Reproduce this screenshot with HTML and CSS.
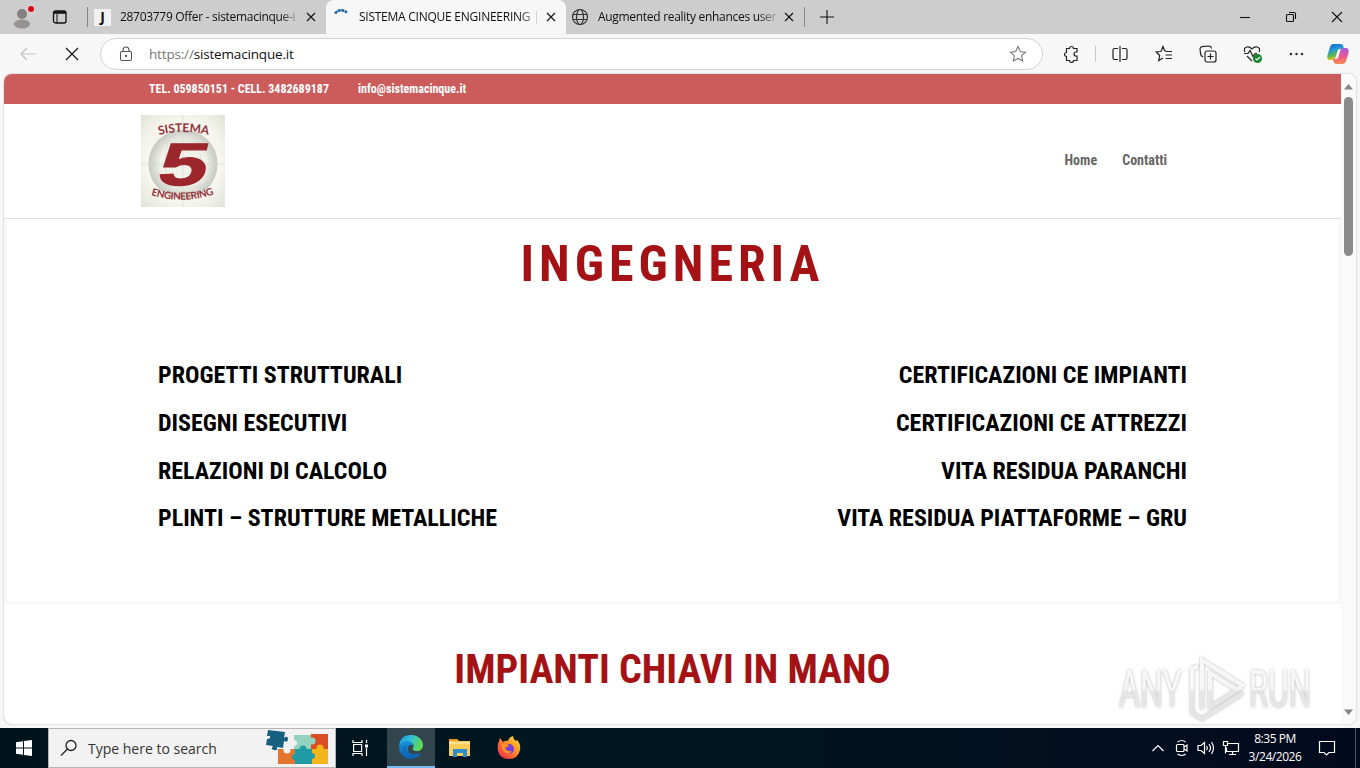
FILE: index.html
```
<!DOCTYPE html>
<html lang="it">
<head>
    <meta charset="UTF-8">
    <title>SISTEMA CINQUE ENGINEERING</title>
    <link rel="stylesheet" href="styles.css">
</head>
<body>
    <div class="tabs">
        <div class="profile">
            <svg width="34" height="34" viewBox="0 0 34 34"><circle cx="22" cy="14" r="5" fill="#858080"/><ellipse cx="22" cy="24" rx="8" ry="4.5" fill="#979391"/><circle cx="31" cy="9" r="4" fill="#e8d4d4"/><circle cx="31" cy="9" r="3" fill="#d9001b"/></svg>
        </div>
        <svg class="workspace" width="16" height="16" viewBox="0 0 16 16" fill="none" stroke="#111" stroke-width="1.3"><rect x="1.5" y="2" width="12.5" height="12" rx="2"/><path d="M1.500 3.500h12.500" stroke-width="2.500"/><path d="M5 5v9" stroke-width="1"/></svg>
        <div class="divider"></div>
        <div class="tab tab-offer">
            <span class="favicon">J</span>
            <span class="tab-title">28703779 Offer - sistemacinque-i</span>
            <svg class="x" width="10" height="10" viewBox="0 0 10 10"><path d="M1 1l8 8M9 1l-8 8"/></svg>
        </div>
        <div class="tab tab-active">
            <svg class="spinner" width="16" height="16" viewBox="0 0 16 16"><path d="M1 4.500Q6.500-1.500 13 3.500" fill="none" stroke="#1763a0" stroke-width="2.500" stroke-dasharray="3 .6"/></svg>
            <span class="tab-title">SISTEMA CINQUE ENGINEERING |</span>
            <svg class="x" width="10" height="10" viewBox="0 0 10 10"><path d="M1 1l8 8M9 1l-8 8"/></svg>
        </div>
        <div class="tab tab-ar">
            <svg width="18" height="18" viewBox="0 0 18 18" fill="none" stroke="#333" stroke-width="1.200"><circle cx="9" cy="9" r="7.500"/><ellipse cx="9" cy="9" rx="3.500" ry="7.500"/><path d="M2 6.500h14M2 11.500h14"/></svg>
            <span class="tab-title">Augmented reality enhances user</span>
            <svg class="x" width="10" height="10" viewBox="0 0 10 10"><path d="M1 1l8 8M9 1l-8 8"/></svg>
        </div>
        <div class="divider last"></div>
        <svg class="plus" width="14" height="14" viewBox="0 0 14 14"><path d="M7 0v14M0 7h14"/></svg>
        <div class="window-buttons">
            <svg width="12" height="12" viewBox="0 0 12 12"><path d="M1 6.500h10"/></svg>
            <svg width="12" height="12" viewBox="0 0 12 12"><rect x="1.500" y="3.500" width="7" height="7" rx="1"/><path d="M4 1.500h5q1.500 0 1.500 1.500v5"/></svg>
            <svg width="12" height="12" viewBox="0 0 12 12"><path d="M1 1l10 10M11 1L1 11"/></svg>
        </div>
    </div>

    <div class="toolbar">
        <svg class="back" width="16" height="14" viewBox="0 0 16 14"><path d="M15.500 7H1M7 1L1 7l6 6"/></svg>
        <svg class="stop" width="14" height="14" viewBox="0 0 14 14"><path d="M1 1l12 12M13 1L1 13"/></svg>
        <div class="address">
            <svg width="14" height="16" viewBox="0 0 14 16" fill="none" stroke="#555" stroke-width="1.100"><rect x="1.500" y="5.500" width="11" height="9" rx="1.500"/><path d="M4 5.500V4a3 3 0 0 1 6 0v1.500"/><circle cx="7" cy="10" r=".6" fill="#555"/></svg>
            <span class="url"><span>https://</span>sistemacinque.it</span>
            <svg class="star" width="18" height="18" viewBox="0 0 18 18" fill="none" stroke="#777" stroke-width="1.100"><path d="M9 1.500l2.300 5 5.200.6-3.900 3.600 1.100 5.300L9 13.400 4.300 16l1.100-5.300L1.500 7.100l5.200-.6z"/></svg>
        </div>
        <div class="tools">
            <svg width="18" height="18" viewBox="0 0 18 18"><path d="M4.500 3.500h3a2 2 0 0 1 4 0H15v3.500h-1a2 2 0 0 0 0 4h1v4.500h-3.500a2 2 0 0 1-4 0h-3V11.500a2 2 0 0 1 0-4z"/></svg>
            <div class="tool-divider"></div>
            <svg width="18" height="18" viewBox="0 0 18 18"><path d="M7 3.500H3.500q-1.500 0-1.500 1.500v8q0 1.500 1.500 1.500H7M11 3.500h3.500q1.500 0 1.500 1.500v8q0 1.500-1.500 1.500H11M9 1v16"/></svg>
            <svg width="18" height="18" viewBox="0 0 18 18"><path d="M11 6L9.500 5.500 8 1.500 6 6.500l-4.800.5 3.500 3.500-1 5L8 13M10.500 6.500H17M10.500 10H17M10.500 13.500H17"/></svg>
            <svg width="18" height="18" viewBox="0 0 18 18"><rect x="6" y="6" width="11" height="11" rx="2"/><path d="M11.500 8.500v6M8.500 11.500h6M4 12Q1.500 11 1.500 8L1 4Q1 2 3 1.700l7-.7q2 0 2.500 2.500"/></svg>
            <svg width="20" height="18" viewBox="0 0 20 18"><path d="M2 7Q0 3 4 2q3-.5 5 2 2-2.500 5-2 4 1 2 5M1 8.500h4l2-3 3 6 2-3h2M4 11l5 5"/><circle cx="14.500" cy="13.500" r="4.500" fill="#16842b" stroke="none"/><path d="M12.500 13.500l1.500 1.500 3-3" stroke="#fff"/></svg>
            <svg class="more" width="18" height="18" viewBox="0 0 18 18"><g fill="#222" stroke="none"><circle cx="4" cy="9" r="1.200"/><circle cx="9.500" cy="9" r="1.200"/><circle cx="15" cy="9" r="1.200"/></g></svg>
            <svg class="copilot" width="22" height="20" viewBox="0 0 22 20">
                <defs>
                    <linearGradient id="cop1" x2="0.300" y2="1"><stop stop-color="#165ac4"/><stop offset=".4" stop-color="#1f97dd"/><stop offset=".75" stop-color="#62b84c"/><stop offset="1" stop-color="#f0c518"/></linearGradient>
                    <linearGradient id="cop2" x2="0" y2="1"><stop stop-color="#a45be0"/><stop offset=".5" stop-color="#ec5595"/><stop offset="1" stop-color="#f98a4c"/></linearGradient>
                </defs>
                <g stroke="none"><path d="M6 0h8q2 0 2.500 3l.5 2h-4q-2 0-2.500 2L8.700 13q-.7 3-3 3H3q-3.500 0-2.500-5L3 3q1-3 3-3z" fill="url(#cop1)"/><path d="M16 20H9q-2 0-2.700-3L6 15h3q2 0 2.500-2L13 7q.8-3 3-3h3q3.500 0 2.500 5L19 17q-1 3-3 3z" fill="url(#cop2)"/></g>
            </svg>
        </div>
    </div>

    <div class="viewport">
        <div class="site">
            <div class="top-header">
                <span class="condensed">TEL. 059850151 - CELL. 3482689187</span>
                <span class="condensed mail">info@sistemacinque.it</span>
            </div>
            <header>
                <svg class="logo" width="84" height="92" viewBox="0 0 84 92">
                    <defs>
                        <radialGradient id="paper" r=".75"><stop offset=".6" stop-color="#f6f6ee"/><stop offset="1" stop-color="#dde0d4"/></radialGradient>
                        <radialGradient id="globe"><stop offset=".65" stop-color="#f1f2ea"/><stop offset="1" stop-color="#c5c9c1"/></radialGradient>
                        <path id="arc-top" d="M18 20Q42 14 68 20"/>
                        <path id="arc-bottom" d="M10 80Q42 90 74 79"/>
                    </defs>
                    <rect width="84" height="92" fill="url(#paper)"/>
                    <circle cx="42" cy="49" r="34.500" fill="url(#globe)"/>
                    <path d="M42 0v92M0 49h84M12 32Q42 20 72 32M12 67Q42 78 72 67M30 17Q18 49 30 81M54 17Q66 49 54 81" fill="none" stroke="#d3d7cf" stroke-width=".6"/>
                    <text class="logo-text"><textPath href="#arc-top" textLength="50">SISTEMA</textPath></text>
                    <text class="logo-five" transform="translate(14.500 69.500) scale(1.450 1) skewX(-9)">5</text>
                    <text class="logo-text small"><textPath href="#arc-bottom" textLength="64">ENGINEERING</textPath></text>
                </svg>
                <nav>
                    <a class="condensed">Home</a>
                    <a class="condensed">Contatti</a>
                </nav>
            </header>
            <section class="ingegneria">
                <h1><span class="condensed">INGEGNERIA</span></h1>
                <div class="columns">
                    <ul>
                        <li class="condensed">PROGETTI STRUTTURALI</li>
                        <li class="condensed">DISEGNI ESECUTIVI</li>
                        <li class="condensed">RELAZIONI DI CALCOLO</li>
                        <li class="condensed">PLINTI – STRUTTURE METALLICHE</li>
                    </ul>
                    <ul class="right">
                        <li class="condensed">CERTIFICAZIONI CE IMPIANTI</li>
                        <li class="condensed">CERTIFICAZIONI CE ATTREZZI</li>
                        <li class="condensed">VITA RESIDUA PARANCHI</li>
                        <li class="condensed">VITA RESIDUA PIATTAFORME – GRU</li>
                    </ul>
                </div>
            </section>
            <section class="impianti">
                <h2><span class="condensed">IMPIANTI CHIAVI IN MANO</span></h2>
            </section>
        </div>
        <div class="scrollbar">
            <svg width="9" height="6" viewBox="0 0 9 6"><path d="M0 5.500L4.500 0 9 5.500z"/></svg>
            <div class="thumb"></div>
            <svg class="down" width="9" height="6" viewBox="0 0 9 6"><path d="M0 .5L4.500 6 9 .5z"/></svg>
        </div>
    </div>

    <!-- watermark -->
    <svg class="watermark" width="212" height="72" viewBox="0 0 212 72">
        <defs><linearGradient id="fade" gradientUnits="userSpaceOnUse" x1="0" y1="10" x2="0" y2="62"><stop offset=".5" stop-color="#fff"/><stop offset=".55" stop-color="#ececec"/></linearGradient></defs>
        <g class="mark">
            <text x="5" y="54" textLength="63" lengthAdjust="spacingAndGlyphs">ANY</text>
            <path d="M84 13l-6 3v44l10 6 41-26M88 56V7l40 25-5 5-27-17v34l32-20"/>
            <text x="135" y="54" textLength="62" lengthAdjust="spacingAndGlyphs">RUN</text>
        </g>
    </svg>

    <div class="taskbar">
        <div class="start">
            <svg width="16" height="16" viewBox="0 0 16 16" fill="#fff"><path d="M0 2.300L7 1.300v6.200H0zM8 1.100L16 0v7.500H8zM0 8.500h7v6.200l-7-1zM8 8.500h8V16l-8-1.100z"/></svg>
        </div>
        <div class="search">
            <svg width="18" height="18" viewBox="0 0 18 18" fill="none" stroke="#222" stroke-width="1.300"><circle cx="11" cy="6.500" r="5"/><path d="M7.500 10L1 16.500"/></svg>
            <span>Type here to search</span>
            <svg class="puzzle" width="64" height="36" viewBox="0 0 64 36">
                <path d="M13 20h17v15H13z" fill="#e3752d"/>
                <path d="M29 6h17v14H29z" fill="#93d3c0"/>
                <path d="M46 5h17v15H46z" fill="#d94e24"/>
                <path d="M30 20h17v15H30z" fill="#1f9ba5"/>
                <path d="M47 20h16v15H47z" fill="#f3b51b"/>
                <circle cx="47" cy="12" r="3.500" fill="#93d3c0"/><circle cx="38" cy="20" r="3.500" fill="#1f9ba5"/><circle cx="55" cy="19" r="3.500" fill="#f3b51b"/><circle cx="47" cy="27" r="3" fill="#1f9ba5"/><circle cx="29" cy="14" r="3" fill="#f2f2f2"/><circle cx="22" cy="21" r="3.500" fill="#f2f2f2"/><circle cx="30" cy="28" r="3" fill="#1f9ba5"/>
                <path d="M3 1l17 2-1 6q4-3 4 1t-4 2l-1 7-6-1q1 4-3 3t-1-4l-7-1 1-6q4 0 3-3H2z" fill="#17607f"/>
            </svg>
        </div>
        <div class="task task-view">
            <svg width="18" height="18" viewBox="0 0 18 18" fill="none" stroke="#fff" stroke-width="1.200"><path d="M2 1v2.500h9V1M2 17v-2.500h9V17M2.600 5.500h8v7h-8zM15.500 1v3M15.500 9v8"/><path d="M14 5.500h3v3h-3z" fill="#fff" stroke="none"/></svg>
        </div>
        <div class="task current">
            <svg width="24" height="24" viewBox="0 0 24 24">
                <defs>
                    <linearGradient id="edge1" x2="1" y2=".3"><stop stop-color="#1b93d8"/><stop offset=".5" stop-color="#2fc1dc"/><stop offset="1" stop-color="#61d955"/></linearGradient>
                    <linearGradient id="edge2" x2="0" y2="1"><stop stop-color="#1795dc"/><stop offset="1" stop-color="#0c59a6"/></linearGradient>
                </defs>
                <path d="M0 11Q1 0 12 0c7 0 12 5 12 10 0 4-3 6-6 6-4 0-5-2-4-3 2-3-1-6-5-6Q3 7 0 11z" fill="url(#edge1)"/>
                <path d="M0 12q2-6 8-6 5 0 6 4-4-1-5 3c-1 5 5 8 13 5q-3 6-10 6Q1 24 0 12z" fill="url(#edge2)"/>
                <path d="M8 10q-5 8 4 14Q3 23 4 15q1-4 4-5z" fill="#1668bd"/>
            </svg>
        </div>
        <div class="task">
            <svg width="22" height="20" viewBox="0 0 22 20"><path d="M0 1h8l2 2h11v15H0z" fill="#f9cd57"/><path d="M0 1h8l1.500 2H0z" fill="#e99c1f"/><path d="M4 11h14v8h-4v-4H8v4H4z" fill="#2d8ecb"/><path d="M0 4h21v2H0z" fill="#ffe090"/></svg>
        </div>
        <div class="task">
            <svg width="24" height="24" viewBox="0 0 24 24">
                <defs><linearGradient id="fox" x1="1" x2=".1" y2="1"><stop stop-color="#ffe84a"/><stop offset=".4" stop-color="#ff9a24"/><stop offset="1" stop-color="#f5234c"/></linearGradient></defs>
                <path d="M2 5l1-3 3 4q3-2 5-1 1-4 5-5 0 3 3 5l1-1q4 4 3 10-2 9-11 9Q3 23 1 15q-1-6 1-10z" fill="url(#fox)"/>
                <circle cx="12" cy="13" r="5" fill="#7a3ee0"/>
                <path d="M5 8q6-1 7 2l-4 2q2 4 7 3-3 5-8 1-3-4-2-8z" fill="#ff9226"/>
            </svg>
        </div>
        <div class="tray">
            <svg width="14" height="8" viewBox="0 0 14 8"><path d="M1.500 7L7 1.500 12.500 7"/></svg>
            <svg width="14" height="18" viewBox="0 0 14 18"><rect x="1.500" y="5.500" width="7.500" height="7" rx="1"/><path d="M9 8l3-2v6l-3-2M2.500 3Q7 0 10.500 3M2.500 15q4.500 3 8 0"/></svg>
            <svg width="18" height="16" viewBox="0 0 18 16"><path d="M1 5.500h3l3.500-3v11L4 10.500H1zM9.500 6q1.500 2 0 4M12 4q3 4 0 8M14.500 2q4 6 0 12"/></svg>
            <svg width="18" height="16" viewBox="0 0 18 16"><path d="M6 3.500h10.500v8H4.500v-4M1.500 1.500h4v4h-4zM3.500 5.500v8M10.500 11.500v3M7 14.500h7"/></svg>
            <div class="clock"><span>8:35 PM</span><span>3/24/2026</span></div>
            <svg class="notify" width="18" height="18" viewBox="0 0 18 18"><path d="M1.500 2.500h15v11H11l-2.500 2.500L6 13.500H1.500z"/></svg>
            <div class="desktop"></div>
        </div>
    </div>
</body>
</html>
```
FILE: styles.css
```
* {
    box-sizing: border-box;
}

body {
    margin: 0;
    width: 1360px;
    height: 768px;
    display: flex;
    flex-direction: column;
    overflow: hidden;
    background: #f7f7f7;
    font-family: "Open Sans", "Noto Sans", sans-serif;
    color: #111;
}

svg {
    display: block;
    flex: none;
}

/* Tab strip */
.tabs {
    display: flex;
    align-items: center;
    height: 34px;
    background: #cdcdcd;
}

.profile {
    width: 52px;
}

.profile svg {
    overflow: visible;
}

.divider {
    width: 1px;
    height: 20px;
    margin-left: 19px;
    background: #8a8a8a;
}

.divider.last {
    margin-left: 0;
}

.tab {
    display: flex;
    align-items: center;
    height: 34px;
    padding-right: 10px;
}

.tab-offer {
    width: 238px;
    padding-left: 6px;
}

.tab-active {
    width: 240px;
    padding-left: 8px;
    background: #f7f7f7;
    border-radius: 8px 8px 0 0;
}

.tab-ar {
    width: 238px;
    padding-left: 5px;
}

.favicon {
    width: 17px;
    height: 17px;
    background: #f1f1f3;
    font: bold 14px/16px "Noto Sans", sans-serif;
    text-align: center;
}

.tab-title {
    flex: 1;
    margin: 0 3px 0 9px;
    white-space: nowrap;
    font-size: 12px;
    line-height: 20px;
    letter-spacing: -0.3px;
    -webkit-mask-image: linear-gradient(to right, #000 160px, transparent 182px);
    mask-image: linear-gradient(to right, #000 160px, transparent 182px);
}

.tab-active .tab-title {
    letter-spacing: -0.25px;
}

.x, .plus, .stop, .window-buttons svg {
    fill: none;
    stroke: #111;
    stroke-width: 1.1;
}

.plus {
    margin-left: 15px;
}

.window-buttons {
    display: flex;
    gap: 34px;
    margin-left: auto;
    margin-right: 17px;
}

/* Toolbar */
.toolbar {
    display: flex;
    align-items: center;
    height: 40px;
    padding-left: 20px;
}

.back {
    fill: none;
    stroke: #c4c4c4;
    stroke-width: 1.2;
}

.stop {
    margin-left: 29px;
}

.address {
    display: flex;
    align-items: center;
    width: 943px;
    height: 32px;
    margin-left: 21px;
    padding: 0 15px 0 18px;
    background: #fff;
    border: 1px solid #d3d3d3;
    border-radius: 16px;
}

.url {
    flex: 1;
    margin-left: 16px;
    font-size: 13.5px;
    letter-spacing: -0.17px;
}

.url span {
    color: #777;
}

.tools {
    display: flex;
    align-items: center;
    gap: 26px;
    margin-left: 19px;
    fill: none;
    stroke: #222;
    stroke-width: 1.2;
}

.tool-divider {
    width: 1px;
    height: 16px;
    margin: 0 -11px;
    background: #c8c8c8;
}

.more {
    margin: 0 -4px 0 -2px;
}

/* Page area */
.viewport {
    display: flex;
    width: 1352px;
    height: 650px;
    margin: 0 4px 4px;
    overflow: hidden;
    background: #fff;
    border-radius: 8px;
    box-shadow: 0 0 2px #aaa;
}

.site {
    width: 1337px;
    font-family: "Roboto", sans-serif;
    font-weight: 700;
}

.condensed {
    display: inline-block;
    font-stretch: 75%;
    white-space: nowrap;
}

.top-header {
    display: flex;
    height: 30px;
    padding-left: 145px;
    background: #cc5c5c;
    color: #fff;
    font-size: 12px;
    line-height: 30px;
}

.mail {
    margin-left: 29px;
}

header {
    display: flex;
    align-items: center;
    justify-content: space-between;
    height: 115px;
    padding: 0 174px 0 137px;
    border-bottom: 1px solid #e0e0e0;
}

.logo-text {
    font: bold 12px "Lato", sans-serif;
    fill: #96323a;
}

.logo-text.small {
    font-size: 10px;
}

.logo-five {
    font: bold 60px "Liberation Sans", sans-serif;
    fill: #9b262c;
    stroke: #9b262c;
    stroke-width: 1.2;
}

nav {
    display: flex;
    gap: 25px;
    padding-bottom: 2px;
    color: #666;
    font-size: 14px;
}

h1, h2 {
    margin: 0;
    text-align: center;
    color: #a51215;
}

.ingegneria {
    height: 385px;
    border: solid #f8f8f8;
    border-width: 0 3px 3px;
}

h1 {
    padding-top: 15px;
    font-size: 50px;
    line-height: 60px;
    letter-spacing: 5px;
}

.columns {
    display: flex;
    justify-content: space-between;
    padding: 58px 151px 0;
}

ul {
    display: flex;
    flex-direction: column;
    align-items: flex-start;
    margin: 0;
    padding: 0;
    list-style: none;
    color: #000;
    font-size: 24px;
    line-height: 47.8px;
}

.right {
    align-items: flex-end;
}

h2 {
    padding-top: 42px;
    font-size: 40px;
    line-height: 48px;
}

.scrollbar {
    display: flex;
    flex-direction: column;
    align-items: center;
    width: 15px;
    padding: 10px 0 9px;
    background: #fafafa;
    fill: #858585;
}

.thumb {
    width: 9px;
    height: 159px;
    margin-top: 7px;
    background: #8b8b8b;
    border-radius: 5px;
}

.down {
    margin-top: auto;
}

.watermark {
    position: absolute;
    left: 1114px;
    top: 653px;
    filter: drop-shadow(0 0 1.5px #aaa);
}

.mark {
    font: 52px "Roboto", sans-serif;
    fill: url(#fade);
    opacity: .85;
}

.mark path {
    fill: none;
    stroke: url(#fade);
    stroke-width: 4;
}

/* Taskbar */
.taskbar {
    display: flex;
    height: 40px;
    background: linear-gradient(to right, #00141c, #001722 45%, #030a1e);
}

.start, .task {
    display: flex;
    align-items: center;
    justify-content: center;
    width: 48px;
}

.task {
    width: 49px;
}

.task-view {
    width: 51px;
    padding-right: 3px;
}

.search {
    display: flex;
    align-items: center;
    width: 288px;
    padding-left: 11px;
    background: #f2f2f2;
    border: 1px solid #b5b5b5;
    font-size: 14px;
    color: #333;
}

.search span {
    width: 167px;
    margin-left: 10px;
    white-space: nowrap;
}

.puzzle {
    margin-left: 10px;
    margin-bottom: 2px;
}

.current {
    width: 48px;
    background: #33464e;
    border-bottom: 2px solid #76b9ed;
}

.tray {
    display: flex;
    align-items: center;
    margin-left: auto;
    gap: 7px;
    color: #fff;
    fill: none;
    stroke: #fff;
    stroke-width: 1.2;
}

.tray svg:nth-child(2) {
    margin: 0 1px 0 3px;
}

.clock {
    display: flex;
    flex-direction: column;
    align-items: center;
    width: 56px;
    font-size: 12px;
    line-height: 18px;
    letter-spacing: -0.45px;
}

.notify {
    margin-left: 8px;
}

.desktop {
    width: 1px;
    height: 40px;
    margin-left: 12px;
    margin-right: 4px;
    background: #4e5462;
}
```
